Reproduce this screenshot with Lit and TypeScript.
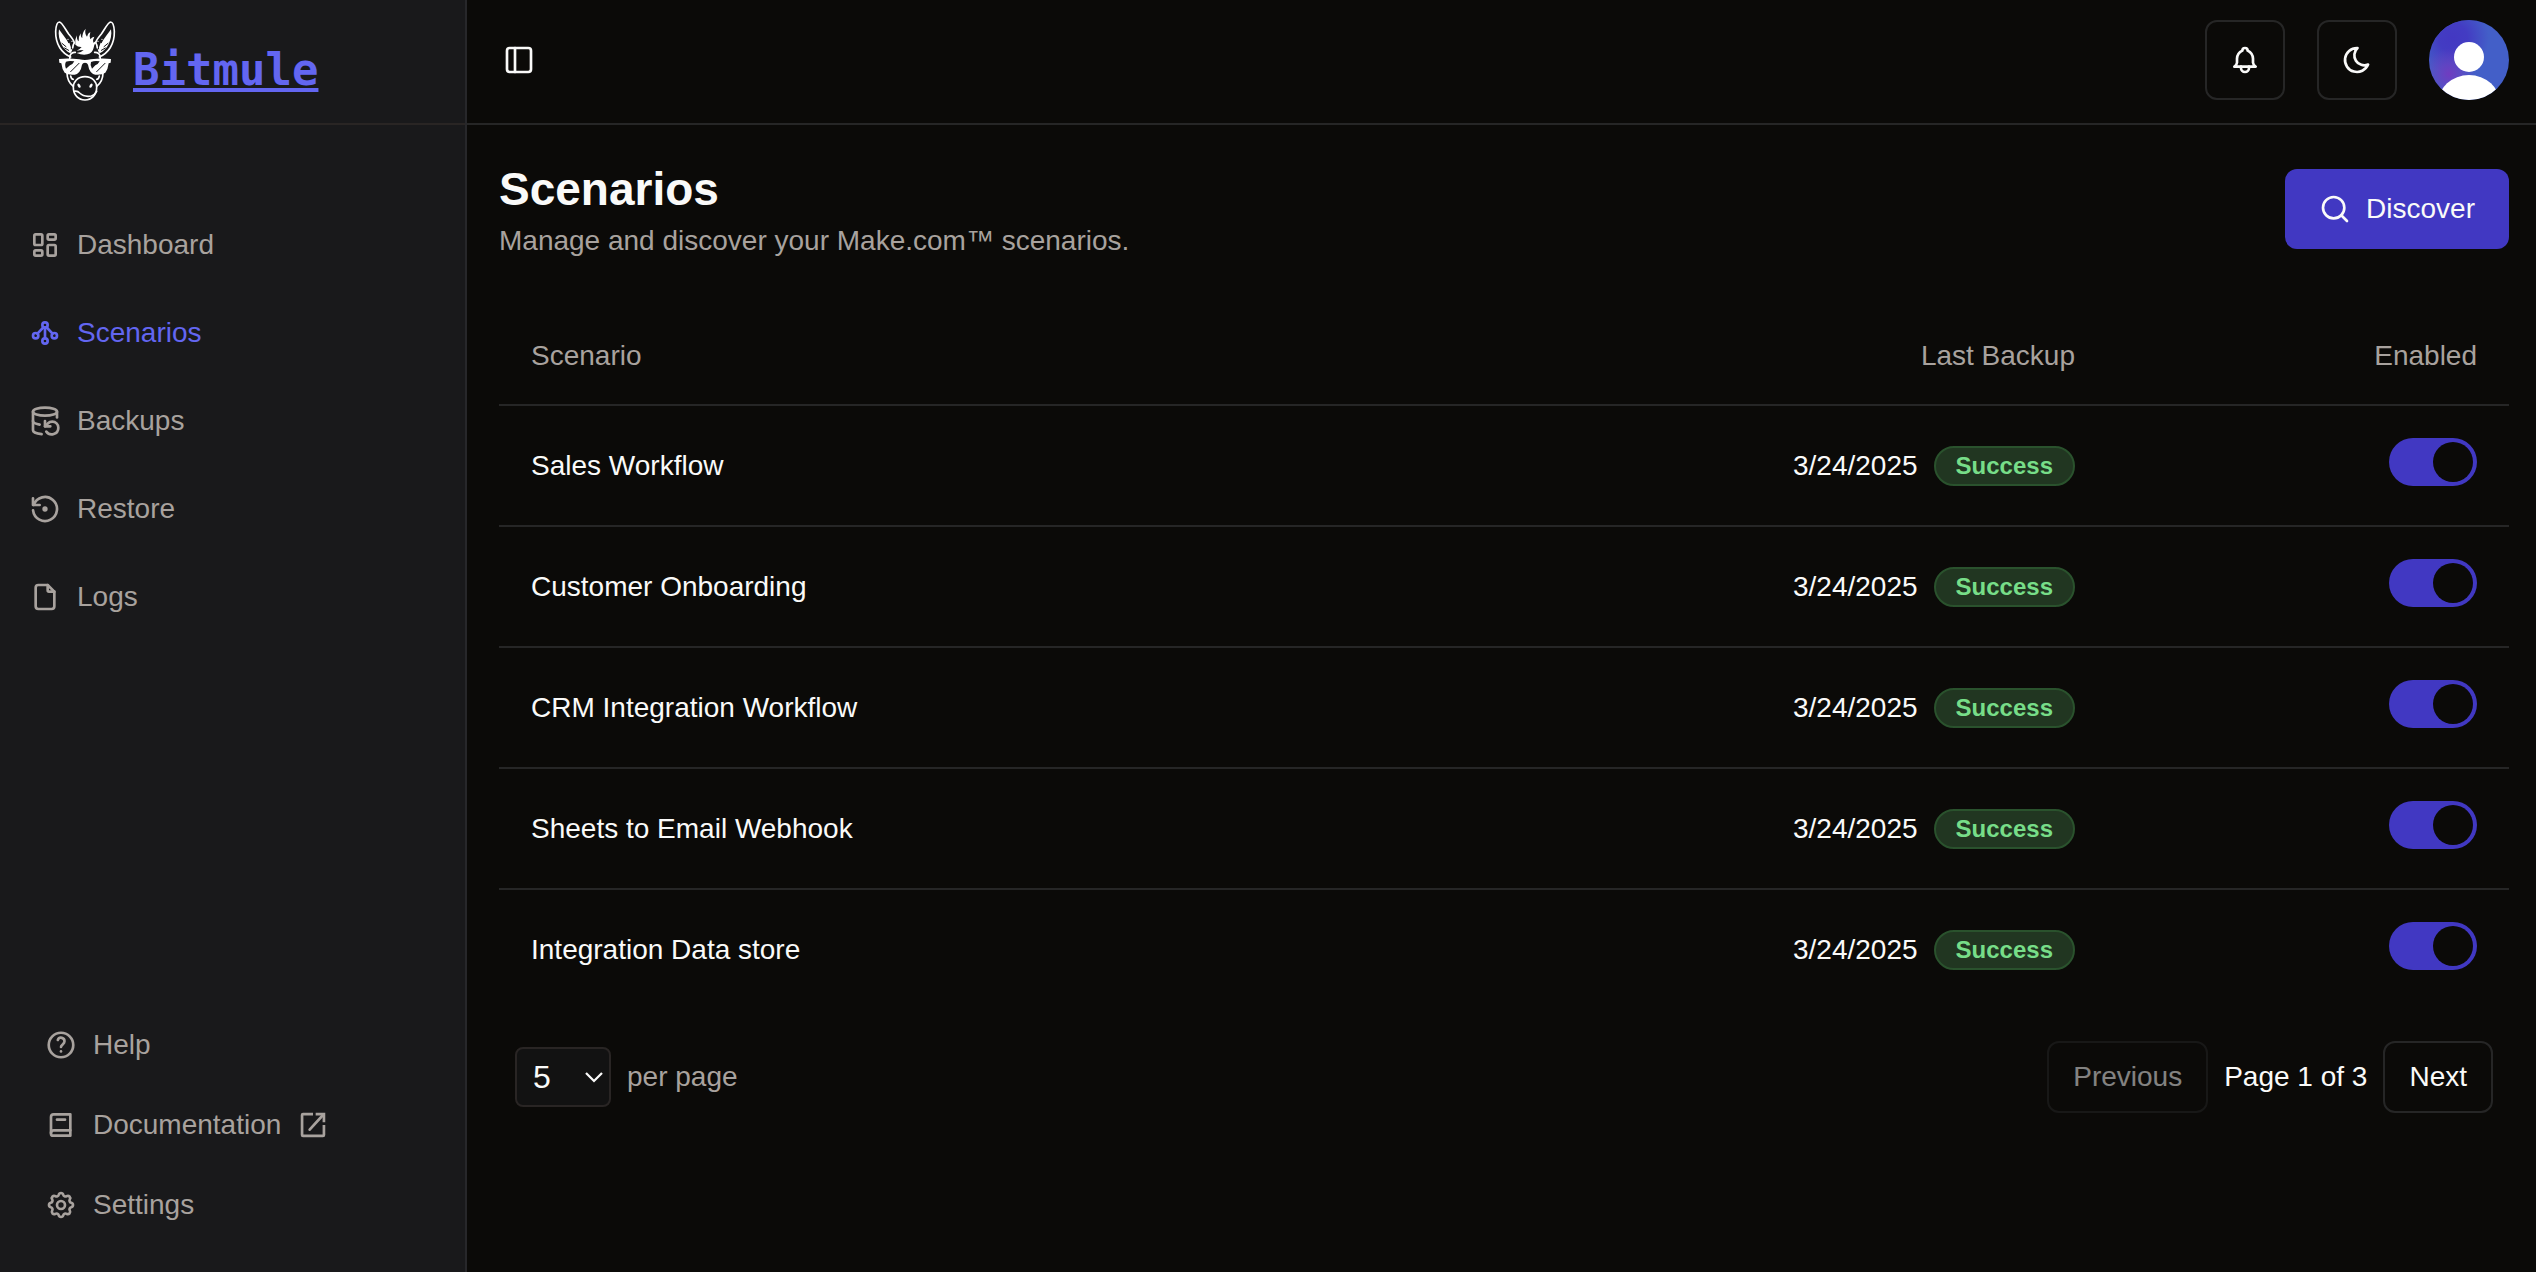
import { LitElement, html, svg, css, type SVGTemplateResult } from "lit";
import { customElement, property, state } from "lit/decorators.js";

const ICONS: Record<string, SVGTemplateResult> = {
  dashboard: svg`
    <rect x="4" y="4" width="6" height="8" rx="1"/>
    <rect x="4" y="16" width="6" height="4" rx="1"/>
    <rect x="14" y="12" width="6" height="8" rx="1"/>
    <rect x="14" y="4" width="6" height="4" rx="1"/>`,
  scenarios: svg`
    <circle cx="12" cy="6" r="2"/><circle cx="5" cy="14" r="2"/>
    <circle cx="19" cy="14" r="2"/><circle cx="12" cy="18" r="2"/>
    <path d="M12 8v8"/><path d="M6.3 12.5 10.9 7.7"/><path d="M17.7 12.5 13.1 7.7"/>`,
  backups: svg`
    <ellipse cx="12" cy="5" rx="9" ry="3"/>
    <path d="M3 12a9 3 0 0 0 5 2.69"/><path d="M21 9.3V5"/>
    <path d="M3 5v14a9 3 0 0 0 6.47 2.88"/><path d="M12 12v4h4"/>
    <path d="M13 20a5 5 0 0 0 9-3 4.5 4.5 0 0 0-4.5-4.5c-1.33 0-2.54.54-3.41 1.41L12 16"/>`,
  restore: svg`
    <path d="M3.06 13a9 9 0 1 0 .49-4.087"/><path d="M3 4v5h5"/>
    <circle cx="12" cy="12" r="1"/>`,
  logs: svg`
    <path d="M14 3v4a1 1 0 0 0 1 1h4"/>
    <path d="M17 21H7a2 2 0 0 1-2-2V5a2 2 0 0 1 2-2h7l5 5v11a2 2 0 0 1-2 2z"/>`,
  help: svg`
    <circle cx="12" cy="12" r="9.2"/>
    <path d="M9.6 8.2a2.6 2.6 0 0 1 5 1.2c0 2-2.600 2.300-2.600 4.100"/><path d="M12 16.800v.01"/>`,
  book: svg`
    <path d="M19 4v16H6a1.5 1.5 0 0 1-1.500-1.500V6a2 2 0 0 1 2-2z"/>
    <path d="M19 16H6.500a2 2 0 0 0-2 2"/><path d="M9 8h6"/>`,
  settings: svg`
    <path d="M10.325 4.317c.426-1.756 2.924-1.756 3.350 0a1.724 1.724 0 0 0 2.573 1.066c1.543-.940 3.310.826 2.370 2.370a1.724 1.724 0 0 0 1.065 2.572c1.756.426 1.756 2.924 0 3.350a1.724 1.724 0 0 0-1.066 2.573c.940 1.543-.826 3.310-2.370 2.370a1.724 1.724 0 0 0-2.572 1.065c-.426 1.756-2.924 1.756-3.350 0a1.724 1.724 0 0 0-2.573-1.066c-1.543.940-3.310-.826-2.370-2.370a1.724 1.724 0 0 0-1.065-2.572c-1.756-.426-1.756-2.924 0-3.350a1.724 1.724 0 0 0 1.066-2.573c-.940-1.543.826-3.310 2.370-2.370 1 .608 2.296.070 2.572-1.065z"/>
    <circle cx="12" cy="12" r="3"/>`,
  external: svg`
    <path stroke-linecap="butt" d="M12 3.800H4.500a.7.7 0 0 0-.7.7v15a.7.7 0 0 0 .7.7h15a.7.7 0 0 0 .7-.7V12"/>
    <path stroke-linecap="butt" stroke-linejoin="miter" d="M14 3.800h6.200V10"/><path d="M9.500 15.500 19.500 4.500"/>`,
  panel: svg`<rect x="3" y="3" width="18" height="18" rx="2"/><path d="M9 3v18"/>`,
  bell: svg`
    <path d="M10 5a2 2 0 1 1 4 0a7 7 0 0 1 4 6v3a4 4 0 0 0 2 3H4a4 4 0 0 0 2-3v-3a7 7 0 0 1 4-6"/>
    <path d="M9 17v1a3 3 0 0 0 6 0v-1"/>`,
  moon: svg`<path d="M12 3h.393a7.500 7.500 0 0 0 7.920 12.446A9 9 0 1 1 12 2.992z"/>`,
  search: svg`<circle cx="11" cy="11" r="8"/><path d="m21 21-4.300-4.300"/>`,
  chevron: svg`<path stroke-width="1.700" stroke-linecap="butt" stroke-linejoin="miter" d="m6 9 6 6 6-6"/>`,
};

@customElement("ui-icon")
class UiIcon extends LitElement {
  static styles = css`
    :host { display: block; flex: none; width: 32px; height: 32px; }
    .glyph {
      display: block; width: 100%; height: 100%; fill: none; stroke: currentColor;
      stroke-width: 2; stroke-linecap: round; stroke-linejoin: round;
    }
  `;
  @property() name = "";
  render() {
    return html`<svg class="glyph" viewBox="0 0 24 24" aria-hidden="true">${ICONS[this.name]}</svg>`;
  }
}

@customElement("mule-logo")
class MuleLogo extends LitElement {
  static styles = css`
    :host { display: block; flex: none; width: 60px; height: 80px; }
    .mule { display: block; width: 100%; height: 100%; overflow: visible; }
    .line { fill: none; stroke: #fff; stroke-width: 5; stroke-linecap: round; stroke-linejoin: round; }
    .fill { fill: #fff; }
    .cut { fill: none; stroke: #19191b; stroke-width: 3; stroke-linecap: round; }
    .shade { fill: #19191b; }
  `;
  private side() {
    return svg`
      <path class="line" d="M92 141C66 130 46 104 47 64C48 48 52 36 58 36C66 37 76 58 86 72C94 82 101 90 103 98"/>
      <path class="fill" d="M57 58C62 66 70 76 76 84C82 92 84 96 85 100L88 98C90 104 95 114 92 118L97 118C96 124 94 126 91 130C80 124 70 114 65 104C58 91 54 74 57 58Z"/>
      <path class="cut" d="M66 100L78 110M74 114L86 121"/>
      <circle class="fill" cx="84" cy="88" r="2"/><circle class="fill" cx="96" cy="94" r="2"/>
      <path class="line" d="M103 98Q98 106 98 114M106 127Q94 126 90 137L89 147"/>
      <path class="line" d="M81 190Q82 216 99 228M92 198Q94 208 100 208"/>`;
  }
  render() {
    return html`
      <svg class="mule" viewBox="45 33 180 240" aria-hidden="true">
        ${this.side()}
        <g transform="matrix(-1 0 0 1 270 0)">${this.side()}</g>
        <path class="fill" d="M106 104Q104 90 110 76Q110 90 116 94Q114 82 122 70Q122 82 127 84Q126 68 137 56Q133 70 141 80Q143 70 151 66Q147 78 151 88Q156 80 163 80Q157 90 160 98Q166 94 169 95Q162 104 161 113Q158 128 142 133Q126 136 110 129Q124 128 131 120Q118 120 110 122Q120 117 125 111Q114 112 106 104Z"/>
        <path class="fill" d="M57 147Q84 143 118 148Q135 152 152 148Q186 143 213 147L212 158L206 160Q204 178 196 188Q186 196 166 194Q148 190 144 164Q142 158 135 158Q128 158 126 164Q122 190 104 194Q84 196 74 188Q66 178 64 160L58 158Z"/>
        <path class="shade" d="M78 155Q88 151 103 154Q98 164 90 166L78 176Q73 164 78 155Z"/>
        <path class="shade" d="M153 156Q164 151 179 154Q174 164 166 166L156 176Q149 166 153 156Z"/>
        <path class="cut" d="M117 160L92 185M195 160L170 185"/>
        <path class="line" d="M135 200C112 200 100 216 100 232C100 256 116 270 135 270C154 270 170 256 170 232C170 216 158 200 135 200Z"/>
        <path class="line" d="M102 244Q112 241 119 249Q132 262 154 258Q164 255 170 244"/>
        <ellipse class="fill" cx="117" cy="227" rx="4" ry="7" transform="rotate(-30 117 227)"/>
        <ellipse class="fill" cx="153" cy="227" rx="4" ry="7" transform="rotate(30 153 227)"/>
      </svg>`;
  }
}

interface Scenario { name: string; date: string; status: string; enabled: boolean; }

@customElement("app-root")
class AppRoot extends LitElement {
  static styles = css`
    :host {
      display: grid; grid-template-columns: 467px minmax(0, 1fr); min-height: 100vh;
      background: #0b0a08; color: #fafaf9;
      font: 28px/40px "Liberation Sans", Arial, sans-serif;
    }
    *, *::before { box-sizing: border-box; }
    a { color: inherit; text-decoration: none; }
    button, select { font: inherit; color: inherit; }
    .sidebar { display: flex; flex-direction: column; background: #19191b; border-right: 2px solid #27272a; }
    .brand-bar { height: 125px; padding: 21px 55px 0; border-bottom: 2px solid #292524; }
    .brand { display: flex; align-items: flex-end; gap: 18px; width: max-content; }
    .brand-name {
      font: bold 44px/62px "DejaVu Sans Mono", monospace; color: #6366f1;
      text-decoration: underline; text-decoration-thickness: 4px; text-underline-offset: 3px;
      text-decoration-skip-ink: none;
    }
    .nav { padding: 76px 29px 0; color: #a8a29e; }
    .nav-link { display: flex; align-items: center; gap: 16px; height: 88px; }
    .nav-link.active { color: #6366f1; }
    .support { margin-top: auto; padding: 0 45px 27px; color: #a8a29e; }
    .support-link { display: flex; align-items: center; gap: 16px; height: 80px; }
    .with-mark { display: flex; align-items: center; gap: 16px; }

    .topbar {
      display: flex; align-items: center; justify-content: space-between;
      height: 125px; padding: 0 27px 3px 36px; border-bottom: 2px solid #262626;
    }
    .ghost { display: block; padding: 0; border: 0; background: none; }
    .tools { display: flex; gap: 32px; }
    .square {
      display: grid; place-items: center; width: 80px; height: 80px; padding: 0;
      border: 2px solid #262626; border-radius: 12px; background: none;
    }
    .avatar { display: block; width: 80px; height: 80px; padding: 0; border: 0; border-radius: 50%; overflow: hidden; background: none; }
    .avatar-art { display: block; width: 80px; height: 80px; }

    .content { padding: 32px 27px 32px 32px; }
    .page-head { display: flex; align-items: center; justify-content: space-between; }
    .title { margin: 0; font-size: 46px; line-height: 64px; font-weight: bold; }
    .subtitle { margin: 0; color: #a8a29e; }
    .discover {
      display: flex; align-items: center; justify-content: center; gap: 15px; height: 80px; padding: 0 34px;
      border: 0; border-radius: 12px; background: #4138c2;
    }
    .table { width: 100%; margin-top: 47px; border-spacing: 0; table-layout: fixed; }
    .wide { width: 60%; }
    .head { height: 98px; padding: 0 32px; font-weight: normal; color: #a8a29e; text-align: left; border-bottom: 2px solid #262626; }
    .cell { height: 121px; padding: 32px; border-bottom: 2px solid #262626; }
    .row:last-child .cell { height: 119px; border-bottom: 0; }
    .right { text-align: right; }
    .backup { display: flex; align-items: center; justify-content: flex-end; gap: 16px; }
    .badge {
      height: 40px; padding: 0 20px; border: 2px solid #2a522d; border-radius: 20px;
      background: #213621; color: #77dd88; font-size: 24px; line-height: 36px; font-weight: bold;
    }
    .toggle {
      display: block; appearance: none; width: 88px; height: 48px; margin: 0 0 7px auto; padding: 4px;
      border-radius: 24px; background: #292524; cursor: pointer;
    }
    .toggle::before { content: ""; display: block; width: 40px; height: 40px; border-radius: 50%; background: #0b0a08; }
    .toggle:checked { background: #4138c2; }
    .toggle:checked::before { margin-left: auto; }

    .pager { display: flex; align-items: center; justify-content: space-between; padding: 32px 16px 0; }
    .group { display: flex; align-items: center; gap: 16px; }
    .select-wrap { position: relative; width: 96px; }
    .select {
      display: block; appearance: none; width: 100%; height: 60px; padding: 0 16px; font-size: 32px;
      border: 2px solid #292524; border-radius: 8px; background: #121212;
    }
    .select-mark { position: absolute; right: 1px; top: 14px; pointer-events: none; }
    .muted { color: #a8a29e; }
    .page-btn { height: 72px; padding: 0 24px; border: 2px solid #262626; border-radius: 12px; background: none; }
    .page-btn:disabled { opacity: 0.5; }
  `;

  @state() private scenarios: Scenario[] = [
    "Sales Workflow", "Customer Onboarding", "CRM Integration Workflow", "Sheets to Email Webhook", "Integration Data store",
  ].map((name) => ({ name, date: "3/24/2025", status: "Success", enabled: true }));

  private nav = [
    ["dashboard", "Dashboard"], ["scenarios", "Scenarios"], ["backups", "Backups"], ["restore", "Restore"], ["logs", "Logs"],
  ];

  render() {
    return html`
      <aside class="sidebar">
        <div class="brand-bar">
          <a class="brand" href="#home"><mule-logo></mule-logo><span class="brand-name">Bitmule</span></a>
        </div>
        <nav class="nav">
          ${this.nav.map(([icon, label]) => html`
            <a class="nav-link ${icon === "scenarios" ? "active" : ""}" href="#${icon}">
              <ui-icon name=${icon}></ui-icon><span>${label}</span>
            </a>`)}
        </nav>
        <nav class="support">
          <a class="support-link" href="#help"><ui-icon name="help"></ui-icon><span>Help</span></a>
          <a class="support-link" href="#documentation">
            <ui-icon name="book"></ui-icon>
            <span class="with-mark">Documentation<ui-icon name="external"></ui-icon></span>
          </a>
          <a class="support-link" href="#settings"><ui-icon name="settings"></ui-icon><span>Settings</span></a>
        </nav>
      </aside>
      <div>
        <header class="topbar">
          <button class="ghost" aria-label="Toggle sidebar"><ui-icon name="panel"></ui-icon></button>
          <div class="tools">
            <button class="square" aria-label="Notifications"><ui-icon name="bell"></ui-icon></button>
            <button class="square" aria-label="Theme"><ui-icon name="moon"></ui-icon></button>
            <button class="avatar" aria-label="Account">
              <svg class="avatar-art" viewBox="0 0 80 80" aria-hidden="true">
                <defs>
                  <radialGradient id="violet" gradientUnits="userSpaceOnUse" cx="24" cy="18" r="36">
                    <stop offset="0" stop-color="#4338c2"/><stop offset="0.4" stop-color="#4338c2" stop-opacity="0.9"/>
                    <stop offset="1" stop-color="#4338c2" stop-opacity="0"/>
                  </radialGradient>
                  <radialGradient id="plum" gradientUnits="userSpaceOnUse" cx="20" cy="54" r="26">
                    <stop offset="0" stop-color="#703cc0"/><stop offset="1" stop-color="#703cc0" stop-opacity="0"/>
                  </radialGradient>
                </defs>
                <rect width="80" height="80" fill="#435fc8"/>
                <rect width="80" height="80" fill="url(#violet)"/>
                <rect width="80" height="80" fill="url(#plum)"/>
                <circle cx="40" cy="37" r="15" fill="#fff"/>
                <ellipse cx="40" cy="83" rx="31" ry="28" fill="#fff"/>
              </svg>
            </button>
          </div>
        </header>
        <main class="content">
          <div class="page-head">
            <div>
              <h1 class="title">Scenarios</h1>
              <p class="subtitle">Manage and discover your Make.com™ scenarios.</p>
            </div>
            <button class="discover"><ui-icon name="search"></ui-icon>Discover</button>
          </div>
          <table class="table">
            <thead>
              <tr>
                <th class="head wide" scope="col">Scenario</th>
                <th class="head right" scope="col">Last Backup</th>
                <th class="head right" scope="col">Enabled</th>
              </tr>
            </thead>
            <tbody>
              ${this.scenarios.map((s) => html`
                <tr class="row">
                  <td class="cell">${s.name}</td>
                  <td class="cell">
                    <div class="backup"><span>${s.date}</span><span class="badge">${s.status}</span></div>
                  </td>
                  <td class="cell">
                    <input class="toggle" type="checkbox" role="switch" aria-label=${s.name} .checked=${s.enabled}>
                  </td>
                </tr>`)}
            </tbody>
          </table>
          <div class="pager">
            <div class="group">
              <div class="select-wrap">
                <select class="select" id="per-page">
                  <option>5</option><option>10</option><option>20</option>
                </select>
                <ui-icon class="select-mark" name="chevron"></ui-icon>
              </div>
              <label class="muted" for="per-page">per page</label>
            </div>
            <div class="group">
              <button class="page-btn" disabled>Previous</button>
              <span>Page 1 of 3</span>
              <button class="page-btn">Next</button>
            </div>
          </div>
        </main>
      </div>`;
  }
}
